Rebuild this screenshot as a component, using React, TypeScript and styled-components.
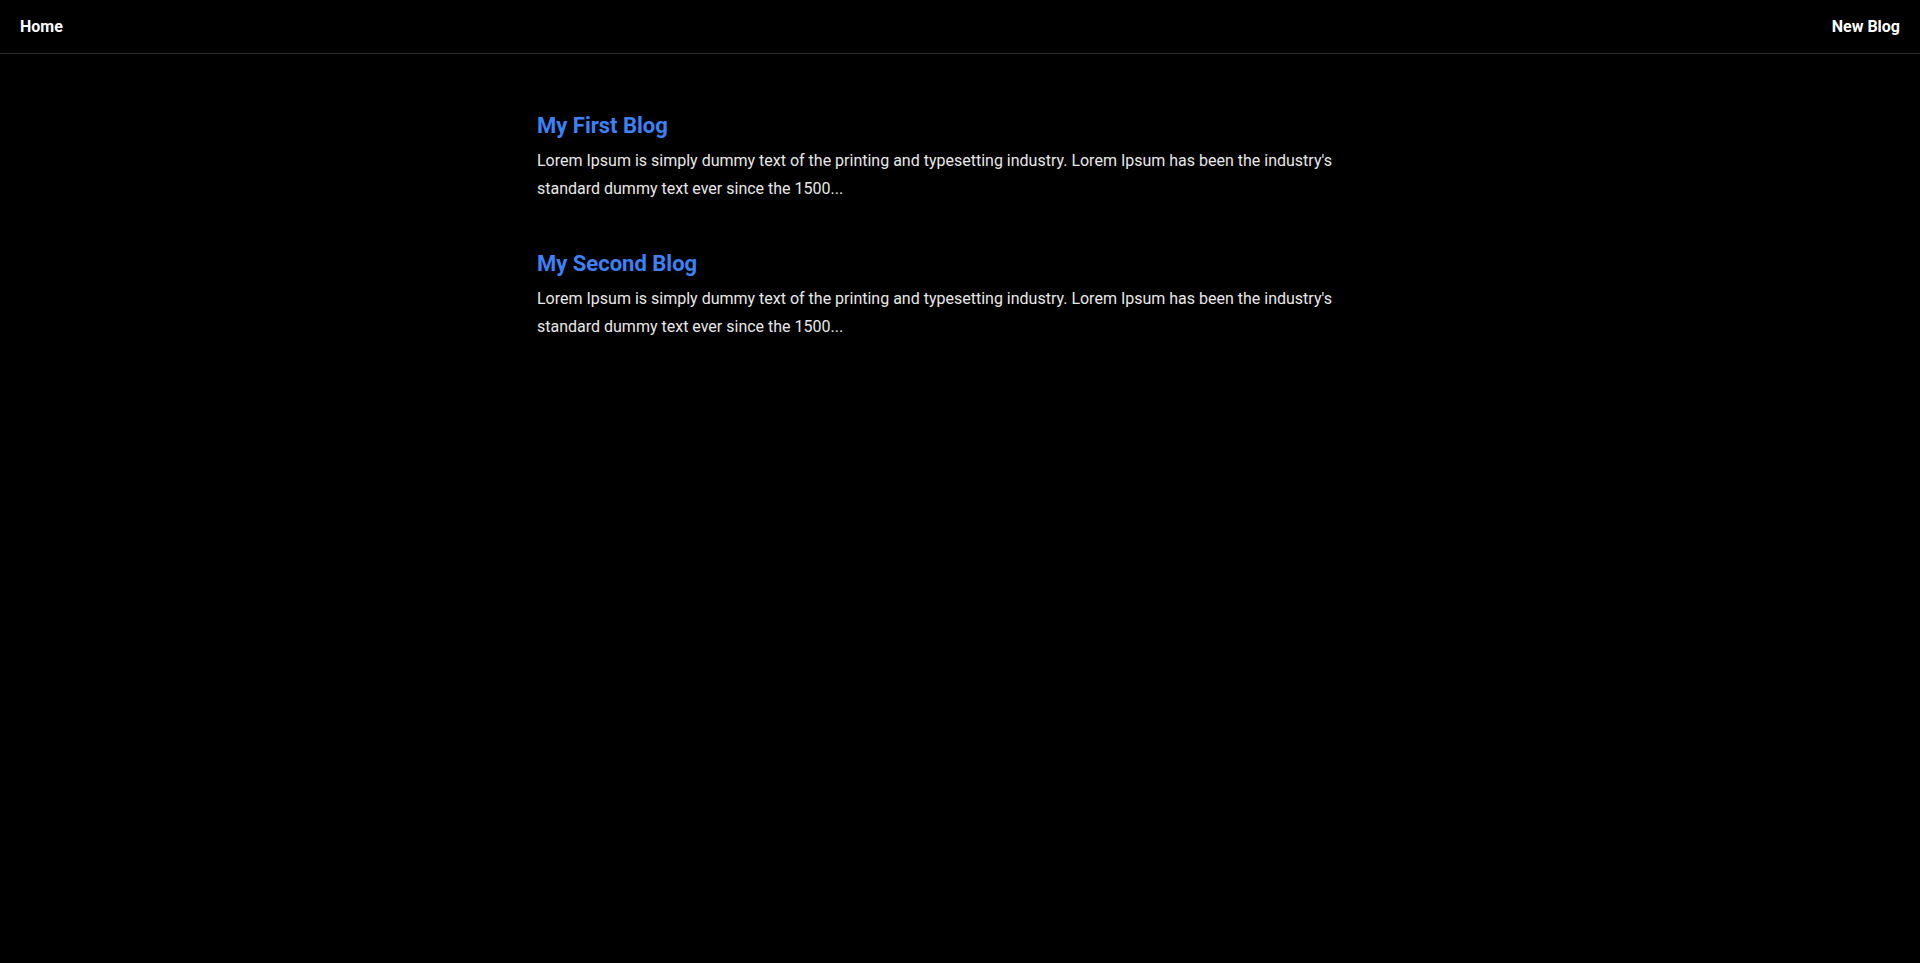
import React from "react";
import styled, { createGlobalStyle } from "styled-components";

const Global = createGlobalStyle`
  html, body { margin: 0; padding: 0; background: #000; }
  body { font-family: Roboto, "Liberation Sans", sans-serif; color: #fff; min-height: 963px; }
`;

const Nav = styled.nav`
  display: flex;
  justify-content: space-between;
  align-items: center;
  height: 54px;
  padding: 0 20px;
  border-bottom: 1px solid #2a2a2a;
  box-sizing: border-box;
`;

const NavLink = styled.a`
  color: #fff;
  font-weight: 700;
  font-size: 16px;
  text-decoration: none;
`;

const Main = styled.main`
  width: 846px;
  margin: 0 auto;
  padding-top: 56px;
  display: flex;
  flex-direction: column;
  gap: 45px;
`;

const Post = styled.article`
  display: flex;
  flex-direction: column;
  gap: 5px;
`;

const Title = styled.h2`
  margin: 0;
  color: #3b82f6;
  font-size: 22px;
  font-weight: 700;
  line-height: 32px;
`;

const Body = styled.p`
  margin: 0;
  color: #e8e8e8;
  font-size: 16px;
  line-height: 28px;
`;

const text =
  "Lorem Ipsum is simply dummy text of the printing and typesetting industry. Lorem Ipsum has been the industry's standard dummy text ever since the 1500...";

export default function App() {
  return (
    <>
      <Global />
      <Nav>
        <NavLink href="#">Home</NavLink>
        <NavLink href="#">New Blog</NavLink>
      </Nav>
      <Main>
        {["My First Blog", "My Second Blog"].map((t) => (
          <Post key={t}>
            <Title>{t}</Title>
            <Body>{text}</Body>
          </Post>
        ))}
      </Main>
    </>
  );
}
